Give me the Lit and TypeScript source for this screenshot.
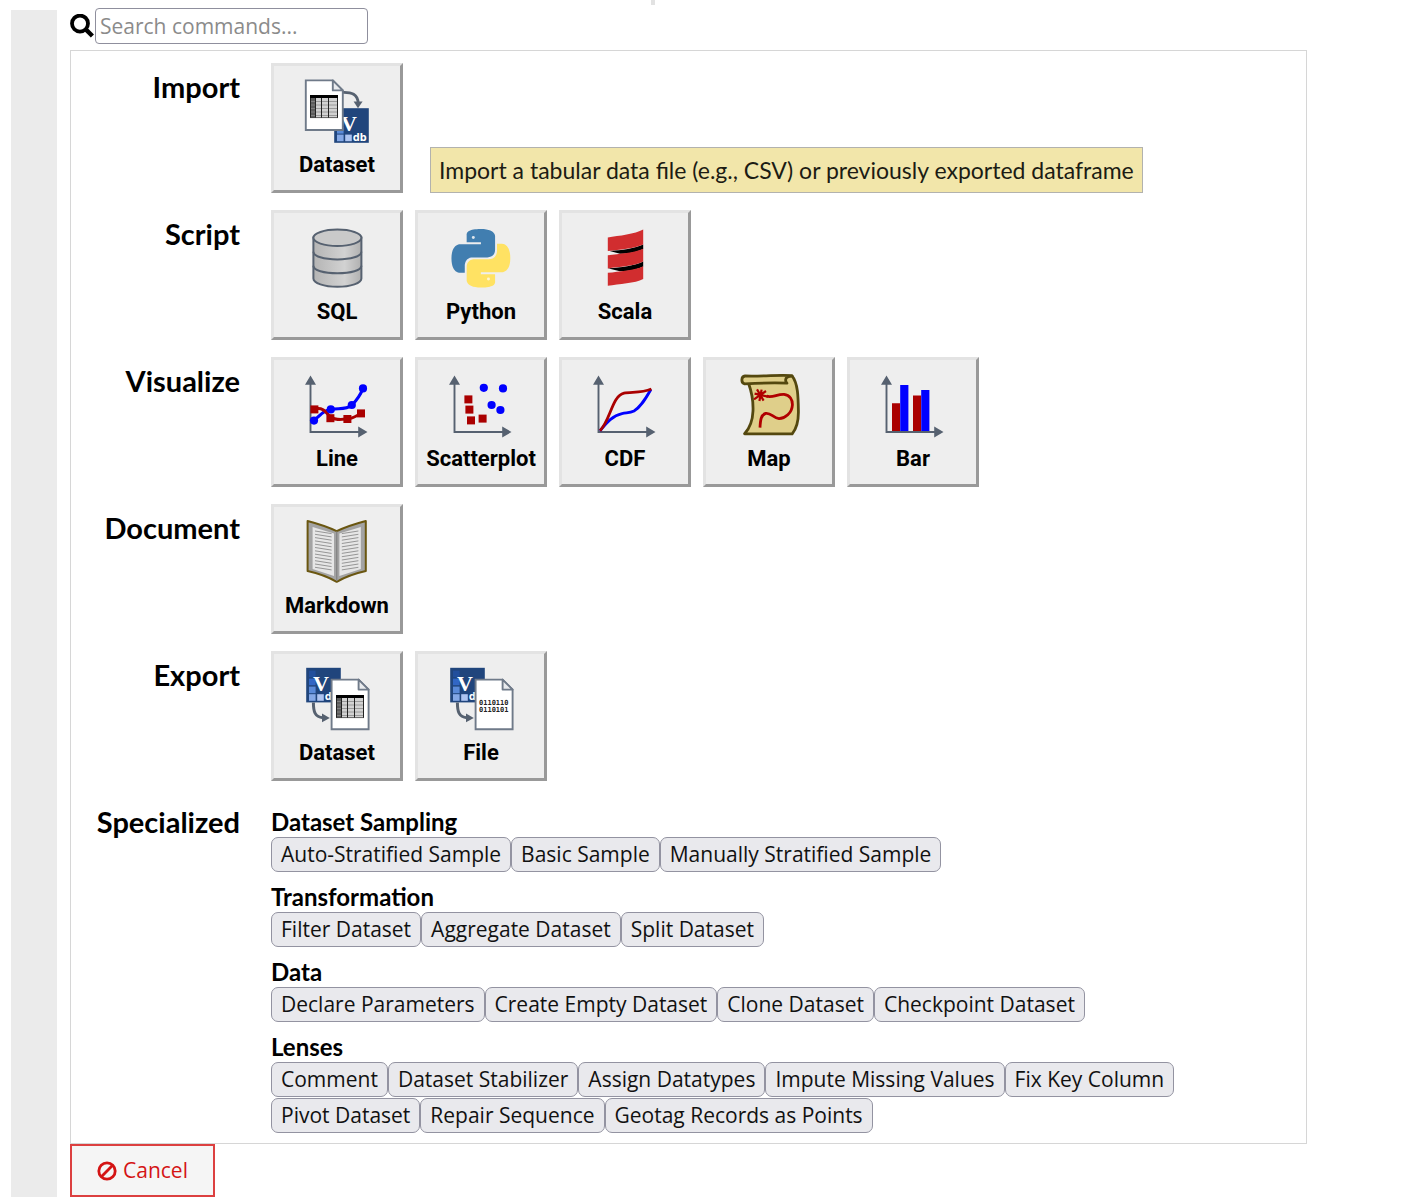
import { LitElement, html, svg, css, nothing, TemplateResult } from "lit";
import { customElement, property } from "lit/decorators.js";

interface Command {
  label: string;
  icon: string;
  tip?: string;
}

interface Category {
  title: string;
  commands: Command[];
}

interface Group {
  title: string;
  commands: string[];
}

const CATEGORIES: Category[] = [
  {
    title: "Import",
    commands: [
      {
        label: "Dataset",
        icon: "import-dataset",
        tip: "Import a tabular data file (e.g., CSV) or previously exported dataframe",
      },
    ],
  },
  {
    title: "Script",
    commands: [
      { label: "SQL", icon: "sql" },
      { label: "Python", icon: "python" },
      { label: "Scala", icon: "scala" },
    ],
  },
  {
    title: "Visualize",
    commands: [
      { label: "Line", icon: "line" },
      { label: "Scatterplot", icon: "scatter" },
      { label: "CDF", icon: "cdf" },
      { label: "Map", icon: "map" },
      { label: "Bar", icon: "bar" },
    ],
  },
  { title: "Document", commands: [{ label: "Markdown", icon: "markdown" }] },
  {
    title: "Export",
    commands: [
      { label: "Dataset", icon: "export-dataset" },
      { label: "File", icon: "export-file" },
    ],
  },
];

const SPECIALIZED: Group[] = [
  {
    title: "Dataset Sampling",
    commands: ["Auto-Stratified Sample", "Basic Sample", "Manually Stratified Sample"],
  },
  {
    title: "Transformation",
    commands: ["Filter Dataset", "Aggregate Dataset", "Split Dataset"],
  },
  {
    title: "Data",
    commands: ["Declare Parameters", "Create Empty Dataset", "Clone Dataset", "Checkpoint Dataset"],
  },
  {
    title: "Lenses",
    commands: [
      "Comment",
      "Dataset Stabilizer",
      "Assign Datatypes",
      "Impute Missing Values",
      "Fix Key Column",
      "Pivot Dataset",
      "Repair Sequence",
      "Geotag Records as Points",
    ],
  },
];

const SLATE = "#566170";
const BLUE = "#0000ff";
const RED = "#aa0000";

const axes = svg`
  <path d="M7.5 13V63H57" fill="none" stroke=${SLATE} stroke-width="1.9"/>
  <path d="M7.5 6.5L13 15.8H2Z M64.5 63L55.2 57.5V68.5Z" fill=${SLATE}/>`;

// A sheet of paper with a folded corner, 37 by 50, drawn from its own origin.
const sheet = svg`
  <path d="M0 0H27L37 10V49.6H0Z" fill="#fff" stroke="#6f7a89" stroke-width="1.9"/>
  <path d="M27 0V10H37Z" fill="#e9ebee" stroke="#6f7a89" stroke-width="1.9" stroke-linejoin="round"/>`;

// A small data table, 28 by 23, drawn from its own origin.
const grid = svg`
  <rect width="28" height="23" fill="#d2d2d2"/>
  <rect width="5" height="23" fill="#5c5c5c"/>
  <path d="M0 6.5H28M0 10H28M0 13.5H28M0 17H28M0 20.5H28" stroke="#8a8a8a" stroke-width="0.8"/>
  <path d="M5.5 2V23M11.5 2V23M18.5 2V23M27.5 2V23M0.5 2V23" stroke="#222" stroke-width="1"/>
  <path d="M0 22.6H28" stroke="#444" stroke-width="0.8"/>
  <rect width="28" height="3" fill="#000"/>`;

// The database badge, 35 by 35, drawn from its own origin.
const badge = svg`
  <rect width="34.6" height="34.6" fill="#20457c"/>
  <rect x="2.8" y="2.8" width="6.6" height="6.6" fill="#224f9c"/>
  <rect x="2.8" y="10.8" width="6.6" height="6.6" fill="#3166c4"/>
  <rect x="2.8" y="18.8" width="6.6" height="6.6" fill="#5a8ad8"/>
  <rect x="2.8" y="26.4" width="6.6" height="6.6" fill="#84a8e6"/>
  <rect x="11" y="26.4" width="6.6" height="6.6" fill="#adc4f0"/>
  <text x="14.8" y="22.8" text-anchor="middle" class="vee">V</text>
  <text x="18.6" y="32.4" class="db">db</text>`;

const dot = (x: number, y: number) => svg`<circle cx=${x} cy=${y} r="4.1" fill=${BLUE}/>`;
const square = (x: number, y: number) =>
  svg`<rect x=${x - 4} y=${y - 4} width="8" height="8" fill=${RED}/>`;

const snake =
  "M14.25.18l.9.2.73.26.59.3.45.32.34.34.25.34.16.33.1.3.04.26.02.2-.01.13V8.5l-.05.63-.13.55-.21.46-.26.38-.3.31-.33.25-.35.19-.35.14-.33.1-.3.07-.26.04-.21.02H8.77l-.69.05-.59.14-.5.22-.41.27-.33.32-.27.35-.2.36-.15.37-.1.35-.07.32-.04.27-.02.21v3.06H3.17l-.21-.03-.28-.07-.32-.12-.35-.18-.36-.26-.36-.36-.35-.46-.32-.59-.28-.73-.21-.88-.14-1.05-.05-1.23.06-1.22.16-1.04.24-.87.32-.71.36-.57.4-.44.42-.33.42-.24.4-.16.36-.1.32-.05.24-.01h.16l.06.01h8.16v-.83H6.18l-.01-2.75-.02-.37.05-.34.11-.31.17-.28.25-.26.31-.23.38-.2.44-.18.51-.15.58-.12.64-.1.71-.06.77-.04.84-.02 1.27.05z";

const exportBase = svg`
  <g transform="translate(3.2 4.8)">${badge}</g>
  <path d="M10.4 39.4C10.4 49 12 54 20 54.8" fill="none" stroke=${SLATE} stroke-width="3"/>
  <path d="M19 50.4L26.8 55L19 59.2Z" fill=${SLATE}/>
  <g transform="translate(28.6 16.6)">${sheet}</g>`;

const pageLines = Array.from({ length: 12 }, (_, i) => {
  const y = 15 + i * 3.3;
  return svg`<path d="M12 ${y}L28.6 ${y + 2.6}M38.8 ${y + 2.6}L55.4 ${y}"/>`;
});

const ICONS: Record<string, TemplateResult> = {
  "import-dataset": svg`
    <g transform="translate(31.2 33.2)">${badge}</g>
    <path d="M39 17.4C49 17 54.6 19 55.2 28" fill="none" stroke=${SLATE} stroke-width="2.8"/>
    <path d="M50.6 26.4H59.6L55 33.2Z" fill=${SLATE}/>
    <g transform="translate(2.8 5.4)">${sheet}</g>
    <g transform="translate(7 20)">${grid}</g>`,
  sql: svg`
    <defs>
      <linearGradient id="steel">
        <stop offset="0" stop-color="#b4b4b4"/>
        <stop offset="0.65" stop-color="#d2d2d2"/>
        <stop offset="1" stop-color="#b0b0b0"/>
      </linearGradient>
    </defs>
    <g fill="none" stroke=${SLATE} stroke-width="2">
      <path d="M10.4 15.6V56.4C10.4 61 21 64.8 34.4 64.8S58.4 61 58.4 56.4V15.6Z" fill="url(#steel)"/>
      <path d="M10.4 43.8C10.4 48.4 21 51.2 34.4 51.2S58.4 48.4 58.4 43.8"/>
      <path d="M10.4 29.8C10.4 34.4 21 37.4 34.4 37.4S58.4 34.4 58.4 29.8"/>
      <ellipse cx="34.4" cy="15.8" rx="24" ry="8.2" fill="#c9c9c9"/>
    </g>`,
  python: svg`
    <g transform="translate(4.6 7) scale(2.44)">
      <path d=${snake} fill="#417eb0"/>
      <circle cx="8.9" cy="3.5" r="0.6" fill="#dfe6ec"/>
      <g transform="rotate(180 12 12)">
        <path d=${snake} fill="#ffe263"/>
        <circle cx="8.9" cy="3.5" r="0.6" fill="#fff6cf"/>
      </g>
    </g>`,
  scala: svg`
    <path d="M16.8 28.6C28 29 44 26 52.2 22.4V27C44 31 34 32 29 31.8Z" fill="#000"/>
    <path d="M16.8 46.2C28 46.4 44 43.6 52.2 39.6V44.4C44 48.4 34 49.4 29 49.2Z" fill="#000"/>
    <g fill="#d12d2f">
      <path d="M16.8 15.4C28 14 44 12 52.2 7.6V22.4C44 26.2 28 27.6 16.8 29Z"/>
      <path d="M16.8 33.2C28 32 44 30.6 52.2 26.8V39.6C44 43.8 28 45 16.8 46.4Z"/>
      <path d="M16.8 50.8C28 49.6 44 48.2 52.2 44.2V57C44 61.4 28 62 16.8 63.8Z"/>
    </g>`,
  line: svg`${axes}
    <path d="M11 51.6C18 45 22 41 28 40.2C37 39 43 41 49 36C55 30 57 27 60 19.4" fill="none" stroke=${BLUE} stroke-width="3"/>
    <path d="M11 40.2C20 38 22 42 27.4 48C32 51.4 38 50.6 44.4 50C50 49.6 53 47 58 44.4" fill="none" stroke=${RED} stroke-width="3"/>
    ${dot(11, 51.6)}${dot(27.8, 40.4)}${dot(48.8, 36)}${dot(60, 19.4)}
    ${square(11.4, 40.4)}${square(27.4, 49.2)}${square(44.4, 50)}${square(58, 44.4)}`,
  scatter: svg`${axes}
    ${dot(36.8, 18.8)}${dot(56, 19.4)}${dot(44.6, 36)}${dot(53.4, 41)}
    ${square(21.4, 30.4)}${square(22.4, 40.6)}${square(24, 51.4)}${square(35.6, 49.6)}`,
  cdf: svg`${axes}
    <path d="M9 61.8C16 53 22 46.4 31 44.6C37 43.6 39 44 43 42C50 38 55 29 60 20.4" fill="none" stroke=${BLUE} stroke-width="2.8"/>
    <path d="M9 61.8C20 50 21 27 33 24.2C40 22.6 50 24.4 60.4 20" fill="none" stroke=${RED} stroke-width="2.8"/>`,
  map: svg`
    <g stroke="#54480f" stroke-width="2.8" stroke-linejoin="round" fill="#dfcf8a">
      <path d="M13.6 14.6C17 24 18.4 32 18 42C17.6 52 14 60 9.6 64.8H57.2C62 59 63.6 52 63.4 42C63.2 28 63 14 57 6.8H45Z"/>
      <path d="M57 6.8C48 5.6 28 7.6 10 7C6 7.4 5.8 14 9.6 14.8C26 14 40 13.6 52 14.2C50 12.4 50 8.6 53.4 7.6Z"/>
    </g>
    <path d="M31.6 27.2C38 29 42 25 49 25.4C55 26 57.6 31 57.4 36C57 44 50 49.6 44 49.6C38 49 36 43.4 30.6 44.4C26 46 25.4 51 25 58.6" fill="none" stroke="#b00000" stroke-width="2.8"/>
    <path d="M22 20.4L28.6 31.6M31 22L19 30.4M19.6 24.6L33 27.6M26.6 20.6L24.4 32" stroke="#b00000" stroke-width="2.2"/>`,
  bar: svg`
    <path d="M13 34.2h8V62.4h-8ZM34 26.6h8V62.4h-8Z" fill=${RED}/>
    <path d="M21.2 16h8.2V62.4h-8.2ZM42.2 21h8.2V62.4h-8.2Z" fill=${BLUE}/>
    ${axes}`,
  markdown: svg`
    <path d="M4.6 5C16 8 26 11.4 33.7 15.2C41.4 11.4 51.4 8 62.8 5V55C51 57.6 41 61.6 33.7 65.8C26.4 61.6 16.4 57.6 4.6 55Z" fill="#a3a3a3" stroke="#6a5610" stroke-width="2" stroke-linejoin="round"/>
    <path d="M9.6 11L31 17.6V60L9.6 53Z M57.8 11L36.4 17.6V60L57.8 53Z" fill="#e6e6e6"/>
    <g stroke="#8c8c8c" stroke-width="0.9">${pageLines}</g>
    <path d="M33.7 15.4V65" stroke="#858585" stroke-width="1.4"/>`,
  "export-dataset": svg`${exportBase}<g transform="translate(33 32)">${grid}</g>`,
  "export-file": svg`${exportBase}
    <text x="32" y="41.6" class="bits">0110110</text>
    <text x="32" y="48.8" class="bits">0110101</text>`,
};

@customElement("command-tile")
export class CommandTile extends LitElement {
  @property({ attribute: false }) command!: Command;

  static styles = css`
    :host {
      display: block;
      position: relative;
    }
    .tile {
      box-sizing: border-box;
      width: 132px;
      height: 130px;
      padding: 9px 0 0;
      border: 3px solid;
      border-color: #e3e3e3 #999 #999 #e3e3e3;
      background: #eee;
      color: #000;
      display: flex;
      flex-direction: column;
      align-items: center;
      gap: 7px;
      font: 700 22px/30px Roboto, "Liberation Sans", sans-serif;
      cursor: pointer;
    }
    .icon {
      width: 68px;
      height: 68px;
      overflow: visible;
    }
    .vee {
      font: 700 22px "Liberation Serif", serif;
      fill: #fff;
    }
    .db {
      font: 700 11px "Noto Sans", sans-serif;
      fill: #fff;
    }
    .bits {
      font: 700 7px "DejaVu Sans Mono", monospace;
      fill: #222;
    }
    .tip {
      position: absolute;
      left: 159px;
      top: 84px;
      padding: 0 8px;
      border: 1px solid #b2b2ae;
      background: #f2e6aa;
      color: #1c1c14;
      font: 23px/44px Lato, "Open Sans", sans-serif;
      white-space: nowrap;
    }
  `;

  render() {
    const { label, icon, tip } = this.command;
    return html`
      <button class="tile" type="button" aria-describedby=${tip ? "tip" : nothing}>
        <svg class="icon" viewBox="0 0 68 68" aria-hidden="true">${ICONS[icon]}</svg>
        <span>${label}</span>
      </button>
      ${tip ? html`<div class="tip" id="tip" role="tooltip">${tip}</div>` : nothing}
    `;
  }
}

@customElement("app-root")
export class AppRoot extends LitElement {
  static styles = css`
    :host {
      box-sizing: border-box;
      display: flex;
      gap: 13px;
      min-height: 100vh;
      padding: 0 94px 0 11px;
      background: #fff;
      color: #000;
      font: 21px/27px "Open Sans", "Noto Sans", sans-serif;
    }
    .rail {
      flex: none;
      width: 46px;
      margin-top: 10px;
      background: #ebebeb;
    }
    .drop-mark {
      position: absolute;
      left: 651px;
      top: 0;
      width: 4px;
      height: 5px;
      background: #e2e2e2;
    }
    .main {
      flex: 1;
      min-width: 0;
      padding-top: 8px;
    }
    .search {
      display: flex;
      align-items: center;
      gap: 1px;
      margin-bottom: 6px;
    }
    .search-icon {
      display: block;
      width: 24px;
      height: 24px;
    }
    .search-box {
      box-sizing: border-box;
      width: 273px;
      height: 36px;
      padding: 0 4px;
      border: 1px solid #8f8f9d;
      border-radius: 4px;
      background: #fff;
      color: #000;
      font: inherit;
    }
    .search-box::placeholder {
      color: #8b8b8b;
    }
    .panel {
      display: flex;
      flex-direction: column;
      gap: 17px;
      padding: 12px 30px 10px 0;
      border: 1px solid #d6d6d6;
    }
    .row {
      display: grid;
      grid-template-columns: 169px 1fr;
      column-gap: 31px;
    }
    .title {
      margin: 0;
      padding-top: 6px;
      text-align: right;
      font: 700 29px/36px Lato, "Open Sans", sans-serif;
    }
    .tiles {
      display: flex;
      flex-wrap: wrap;
      gap: 12px;
    }
    .groups {
      display: flex;
      flex-direction: column;
      gap: 10px;
      padding-top: 9px;
    }
    .group-title {
      margin: 0;
      font: 700 24px/30px Lato, "Open Sans", sans-serif;
    }
    .chips {
      display: flex;
      flex-wrap: wrap;
      row-gap: 1px;
    }
    .chip {
      padding: 3px 9px;
      border: 1px solid #9393a1;
      border-radius: 7px;
      background: #e9e9ed;
      color: #111;
      font: inherit;
      cursor: pointer;
    }
    .cancel {
      display: flex;
      align-items: center;
      justify-content: center;
      gap: 6px;
      box-sizing: border-box;
      width: 145px;
      height: 53px;
      padding: 0;
      border: 2px solid #dc4040;
      background: #f5f5f5;
      color: #d41414;
      font: inherit;
      cursor: pointer;
    }
    .ban {
      width: 20px;
      height: 20px;
    }
  `;

  render() {
    return html`
      <div class="rail"></div>
      <div class="drop-mark"></div>
      <main class="main">
        <div class="search">
          <label for="query" aria-label="Search commands">
            <svg class="search-icon" viewBox="0 0 24 24" aria-hidden="true">
              <circle cx="10" cy="9.6" r="8" fill="none" stroke="#000" stroke-width="3.8" />
              <path d="M15.8 15.4L22.4 22" stroke="#000" stroke-width="4.4" />
            </svg>
          </label>
          <input class="search-box" id="query" type="text" placeholder="Search commands..." />
        </div>
        <div class="panel">
          ${CATEGORIES.map(
            (category) => html`
              <section class="row">
                <h2 class="title">${category.title}</h2>
                <div class="tiles">
                  ${category.commands.map(
                    (command) => html`<command-tile .command=${command}></command-tile>`
                  )}
                </div>
              </section>
            `
          )}
          <section class="row">
            <h2 class="title">Specialized</h2>
            <div class="groups">
              ${SPECIALIZED.map(
                (group) => html`
                  <div>
                    <h3 class="group-title">${group.title}</h3>
                    <div class="chips">
                      ${group.commands.map(
                        (name) => html`<button class="chip" type="button">${name}</button>`
                      )}
                    </div>
                  </div>
                `
              )}
            </div>
          </section>
        </div>
        <button class="cancel" type="button">
          <svg class="ban" viewBox="0 0 20 20" aria-hidden="true">
            <circle cx="10" cy="10" r="8.2" fill="none" stroke="currentColor" stroke-width="2.8" />
            <path d="M4.6 15.4L15.4 4.6" stroke="currentColor" stroke-width="2.8" />
          </svg>
          <span>Cancel</span>
        </button>
      </main>
    `;
  }
}
